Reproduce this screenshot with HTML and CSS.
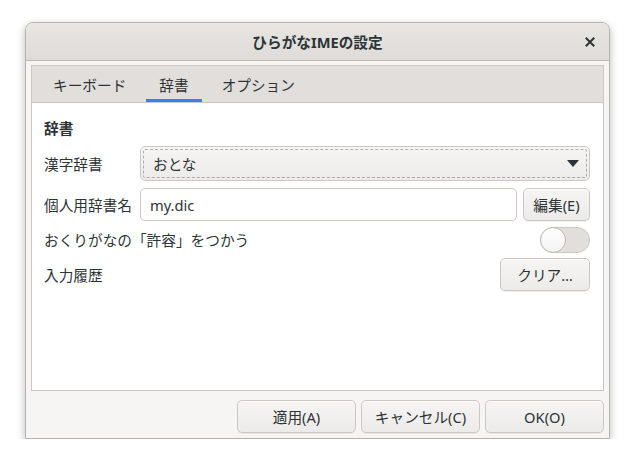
FILE: index.html
```html
<!DOCTYPE html>
<html lang="ja">
<head>
    <meta charset="UTF-8">
    <meta name="viewport" content="width=device-width, initial-scale=1.0">
    <title>ひらがなIMEの設定</title>
    <link rel="stylesheet" href="styles.css">
</head>
<body>
    <div class="window">
        <div class="titlebar">
            <span class="title">ひらがなIMEの設定</span>
            <span class="close">
                <svg width="10" height="10" viewBox="0 0 10 10"><path d="M1.5 1.5 L8.5 8.5 M8.5 1.5 L1.5 8.5" stroke="#2e3436" stroke-width="2" stroke-linecap="square"/></svg>
            </span>
        </div>
        <div class="content">
            <div class="notebook">
                <div class="tabs">
                    <div class="tab">キーボード</div>
                    <div class="tab active">辞書</div>
                    <div class="tab">オプション</div>
                </div>
                <div class="page">
                    <div class="heading">辞書</div>
                    <div class="grid">
                        <div class="label">漢字辞書</div>
                        <div class="combo">
                            <span>おとな</span>
                            <svg width="12" height="7" viewBox="0 0 12 7"><path d="M0 0 H12 L6 7 Z" fill="#2e3436"/></svg>
                        </div>

                        <div class="label">個人用辞書名</div>
                        <div class="entry-row">
                            <div class="entry">my.dic</div>
                            <button class="btn edit">編集(E)</button>
                        </div>

                        <div class="wide">
                            <span class="label">おくりがなの「許容」をつかう</span>
                            <div class="switch"><div class="knob"></div></div>
                        </div>

                        <div class="wide">
                            <span class="label">入力履歴</span>
                            <button class="btn clear">クリア…</button>
                        </div>
                    </div>
                </div>
            </div>
            <div class="actions">
                <button class="btn action">適用(A)</button>
                <button class="btn action">キャンセル(C)</button>
                <button class="btn action">OK(O)</button>
            </div>
        </div>
    </div>
</body>
</html>
```

FILE: styles.css
```css
body {
    margin: 0;
    padding: 22px 0 0 25px;
    background: #ffffff;
    font-family: "Noto Sans", "Noto Sans CJK JP", sans-serif;
    font-size: 14.67px;
    color: #2e3436;
}

.window {
    width: 585px;
    height: 417px;
    box-sizing: border-box;
    background: #f6f5f4;
    border: 1px solid #b6b3ae;
    border-radius: 8px 8px 0 0;
    box-shadow: 0 3px 9px rgba(0, 0, 0, 0.28);
    display: flex;
    flex-direction: column;
    overflow: hidden;
}

.titlebar {
    height: 37px;
    flex: none;
    background: linear-gradient(#e8e6e3, #dedbd8);
    border-bottom: 1px solid #bfb8b1;
    display: flex;
    align-items: center;
    justify-content: center;
    position: relative;
}

.title {
    font-weight: bold;
    font-size: 14.67px;
}

.close {
    position: absolute;
    right: 14px;
    top: 14px;
    display: flex;
}

.content {
    flex: 1;
    display: flex;
    flex-direction: column;
    padding: 4px 5px 5px 5px;
}

.notebook {
    height: 326px;
    box-sizing: border-box;
    border: 1px solid #cdc7c2;
    background: #ffffff;
    display: flex;
    flex-direction: column;
}

.tabs {
    height: 36px;
    background: #e1dedb;
    border-bottom: 1px solid #cdc7c2;
    display: flex;
    gap: 7px;
    padding-left: 8px;
}

.tab {
    padding: 3px 13px 0;
    display: flex;
    align-items: center;
    justify-content: center;
    box-sizing: border-box;
    border-bottom: 3px solid transparent;
    color: #2e3436;
}

.tab.active {
    border-bottom-color: #3584e4;
}

.page {
    padding: 15px 13px 0 12px;
}

.heading {
    font-weight: bold;
    line-height: 20px;
    margin-bottom: 8px;
}

.grid {
    display: grid;
    grid-template-columns: 89px 1fr;
    column-gap: 7px;
    row-gap: 7px;
    align-items: center;
}

.wide {
    grid-column: 1 / 3;
    display: flex;
    justify-content: space-between;
    align-items: center;
}

.combo {
    height: 35px;
    box-sizing: border-box;
    border: 1px solid #cdc7c2;
    border-radius: 5px;
    background: linear-gradient(#f6f5f4, #edebe9);
    outline: 1px dashed rgba(46, 52, 54, 0.35);
    outline-offset: -4px;
    display: flex;
    align-items: center;
    justify-content: space-between;
    padding: 0 10px 0 12px;
}

.entry-row {
    display: flex;
    gap: 6px;
}

.entry {
    flex: 1;
    height: 33px;
    box-sizing: border-box;
    border: 1px solid #cdc7c2;
    border-radius: 5px;
    background: #ffffff;
    display: flex;
    align-items: center;
    padding-left: 9px;
}

.btn {
    height: 33px;
    box-sizing: border-box;
    border: 1px solid #cdc7c2;
    border-radius: 5px;
    background: linear-gradient(#f6f5f4, #edebe9);
    box-shadow: inset 0 1px #ffffff, 0 1px rgba(0, 0, 0, 0.05);
    font-family: "Noto Sans", "Noto Sans CJK JP", sans-serif;
    font-size: 14.67px;
    color: #2e3436;
    padding: 0 8px;
}

.edit {
    width: 67px;
    padding: 0;
}

.clear {
    width: 90px;
}

.switch {
    width: 50px;
    height: 26px;
    box-sizing: border-box;
    border: 1px solid #cdc7c2;
    border-radius: 13px;
    background: #e1dedb;
    position: relative;
    margin: -1px 0 -2px;
}

.knob {
    position: absolute;
    left: -1px;
    top: -1px;
    width: 26px;
    height: 26px;
    box-sizing: border-box;
    border: 1px solid #bfb8b1;
    border-radius: 50%;
    background: linear-gradient(#ffffff, #f4f3f2);
}

.actions {
    display: flex;
    justify-content: flex-end;
    gap: 5px;
    margin-top: 9px;
}

.action {
    width: 119px;
    padding: 0;
}
```
